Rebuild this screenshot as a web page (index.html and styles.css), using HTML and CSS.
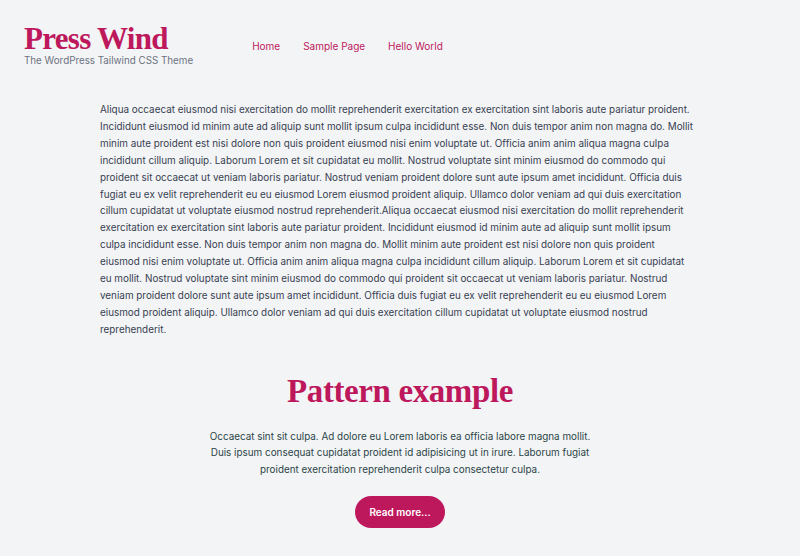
FILE: index.html
```html
<!DOCTYPE html>
<html lang="en">
<head>
<meta charset="utf-8">
<title>Press Wind</title>
<link rel="stylesheet" href="styles.css">
</head>
<body>
<header class="site-header">
  <div class="branding">
    <h1 class="site-title">Press Wind</h1>
    <p class="site-desc">The WordPress Tailwind CSS Theme</p>
  </div>
  <nav class="nav">
    <a href="#">Home</a>
    <a href="#">Sample Page</a>
    <a href="#">Hello World</a>
  </nav>
</header>
<main class="main">
  <p class="intro">Aliqua occaecat eiusmod nisi exercitation do mollit reprehenderit exercitation ex exercitation sint laboris aute pariatur proident. Incididunt eiusmod id minim aute ad aliquip sunt mollit ipsum culpa incididunt esse. Non duis tempor anim non magna do. Mollit minim aute proident est nisi dolore non quis proident eiusmod nisi enim voluptate ut. Officia anim anim aliqua magna culpa incididunt cillum aliquip. Laborum Lorem et sit cupidatat eu mollit. Nostrud voluptate sint minim eiusmod do commodo qui proident sit occaecat ut veniam laboris pariatur. Nostrud veniam proident dolore sunt aute ipsum amet incididunt. Officia duis fugiat eu ex velit reprehenderit eu eu eiusmod Lorem eiusmod proident aliquip. Ullamco dolor veniam ad qui duis exercitation cillum cupidatat ut voluptate eiusmod nostrud reprehenderit.Aliqua occaecat eiusmod nisi exercitation do mollit reprehenderit exercitation ex exercitation sint laboris aute pariatur proident. Incididunt eiusmod id minim aute ad aliquip sunt mollit ipsum<br>culpa incididunt esse. Non duis tempor anim non magna do. Mollit minim aute proident est nisi dolore non quis proident<br>eiusmod nisi enim voluptate ut. Officia anim anim aliqua magna culpa incididunt cillum aliquip. Laborum Lorem et sit cupidatat<br>eu mollit. Nostrud voluptate sint minim eiusmod do commodo qui proident sit occaecat ut veniam laboris pariatur. Nostrud<br>veniam proident dolore sunt aute ipsum amet incididunt. Officia duis fugiat eu ex velit reprehenderit eu eu eiusmod Lorem<br>eiusmod proident aliquip. Ullamco dolor veniam ad qui duis exercitation cillum cupidatat ut voluptate eiusmod nostrud<br>reprehenderit.</p>
  <section class="pattern">
    <h2 class="pattern-title">Pattern example</h2>
    <p class="pattern-text">Occaecat sint sit culpa. Ad dolore eu Lorem laboris ea officia labore magna mollit. Duis ipsum consequat cupidatat proident id adipisicing ut in irure. Laborum fugiat proident exercitation reprehenderit culpa consectetur culpa.</p>
    <a class="btn" href="#">Read more...</a>
  </section>
</main>
</body>
</html>
```
FILE: styles.css
```css
html, body {
  margin: 0;
  padding: 0;
}
body {
  background: #f3f4f6;
  font-family: Inter, "Noto Sans", sans-serif;
  color: #374151;
  font-size: 9.9px;
  line-height: 16.9px;
}
.site-header {
  display: flex;
  align-items: center;
  padding: 24px 24px 0 24px;
  gap: 59px;
}
.site-title {
  margin: 0;
  font-family: "Liberation Serif", serif;
  font-weight: 700;
  font-size: 31px;
  line-height: 30px;
  letter-spacing: -0.7px;
  color: #be185d;
}
.site-desc {
  margin: 0;
  color: #6b7280;
  font-size: 9.8px;
  line-height: 14px;
}
.nav {
  display: flex;
  gap: 23px;
  font-size: 10px;
}
.nav a {
  color: #be185d;
  text-decoration: none;
}
.main {
  width: 600px;
  margin: 0 auto;
  padding-top: 33px;
}
.intro {
  margin: 0;
}
.pattern {
  display: flex;
  flex-direction: column;
  align-items: center;
  text-align: center;
  padding-top: 28px;
}
.pattern-title {
  margin: 0;
  font-family: "Liberation Serif", serif;
  font-weight: 700;
  font-size: 33px;
  line-height: 50px;
  letter-spacing: -0.4px;
  color: #be185d;
}
.pattern-text {
  margin: 12px 0 0;
  width: 392px;
  font-size: 9.9px;
  line-height: 16.5px;
  color: #2b4447;
}
.btn {
  margin-top: 19px;
  display: inline-block;
  background: #be185d;
  color: #fff;
  text-decoration: none;
  font-weight: 600;
  font-size: 10px;
  border-radius: 999px;
  padding: 8px 14px;
  line-height: 16px;
}
```
